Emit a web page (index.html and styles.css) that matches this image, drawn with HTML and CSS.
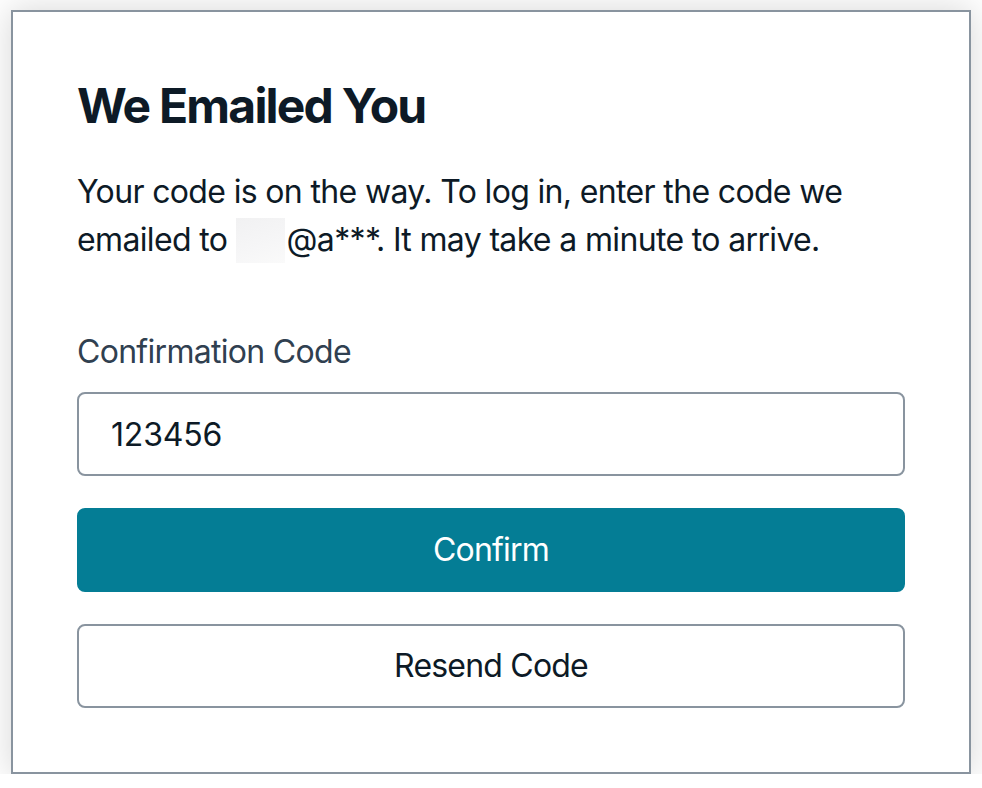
FILE: index.html
```html
<!DOCTYPE html>
<html lang="en">
<head>
<meta charset="utf-8">
<title>We Emailed You</title>
<link rel="stylesheet" href="styles.css">
</head>
<body>
<div class="card">
  <form class="form">
    <div class="header">
      <h3 class="heading">We Emailed You</h3>
      <p class="text">Your code is on the way. To log in, enter the code we emailed to <span class="redact"></span>@a***. It may take a minute to arrive.</p>
    </div>
    <div class="body">
      <div class="field">
        <label class="label" for="code">Confirmation Code</label>
        <input class="input" id="code" type="text" value="123456">
      </div>
      <button type="button" class="btn btn-primary">Confirm</button>
      <button type="button" class="btn btn-secondary">Resend Code</button>
    </div>
  </form>
</div>
</body>
</html>
```

FILE: styles.css
```css
* { box-sizing: border-box; }
html, body { margin: 0; padding: 0; background: #ffffff; }
body {
  font-family: Inter, "Noto Sans", "Liberation Sans", sans-serif;
  color: #0d1a26;
  padding-top: 10px;
}
.card {
  width: 960px;
  margin: 0 auto;
  border: 2px solid #89949f;
  background: #ffffff;
  box-shadow: 0 0 32px 2px rgba(0, 0, 0, 0.15);
  padding: 64px;
}
.form {
  display: flex;
  flex-direction: column;
  gap: 64px;
}
.header {
  display: flex;
  flex-direction: column;
  gap: 32px;
}
.heading {
  margin: 0;
  font-size: 48px;
  line-height: 60px;
  font-weight: 700;
  color: #0d1a26;
  letter-spacing: -1.8px;
}
.text {
  margin: 0;
  font-size: 32px;
  line-height: 48px;
  color: #0d1a26;
  letter-spacing: -0.65px;
}
.redact {
  display: inline-block;
  width: 49px;
  height: 45px;
  margin: 0 2px 0 0;
  vertical-align: -12px;
  background: linear-gradient(160deg, #f1f1f2 0%, #f6f6f7 60%, #fafafa 100%);
}
.body {
  display: flex;
  flex-direction: column;
  gap: 32px;
}
.field {
  display: flex;
  flex-direction: column;
  gap: 16px;
}
.label {
  font-size: 32px;
  line-height: 48px;
  color: #304050;
  letter-spacing: -0.7px;
}
.input {
  font-family: inherit;
  font-size: 32px;
  line-height: 48px;
  height: 84px;
  padding: 16px 32px;
  border: 2px solid #89949f;
  border-radius: 8px;
  color: #0d1a26;
  background: #ffffff;
  width: 100%;
  outline: none;
  letter-spacing: -0.2px;
}
.btn {
  font-family: inherit;
  font-size: 32px;
  line-height: 48px;
  height: 84px;
  padding: 16px 32px;
  border-radius: 8px;
  width: 100%;
  font-weight: 400;
  letter-spacing: -0.8px;
  cursor: pointer;
}
.btn-primary {
  background: #047d95;
  border: 2px solid #047d95;
  color: #ffffff;
}
.btn-secondary {
  background: #ffffff;
  border: 2px solid #89949f;
  color: #0d1a26;
}
```
